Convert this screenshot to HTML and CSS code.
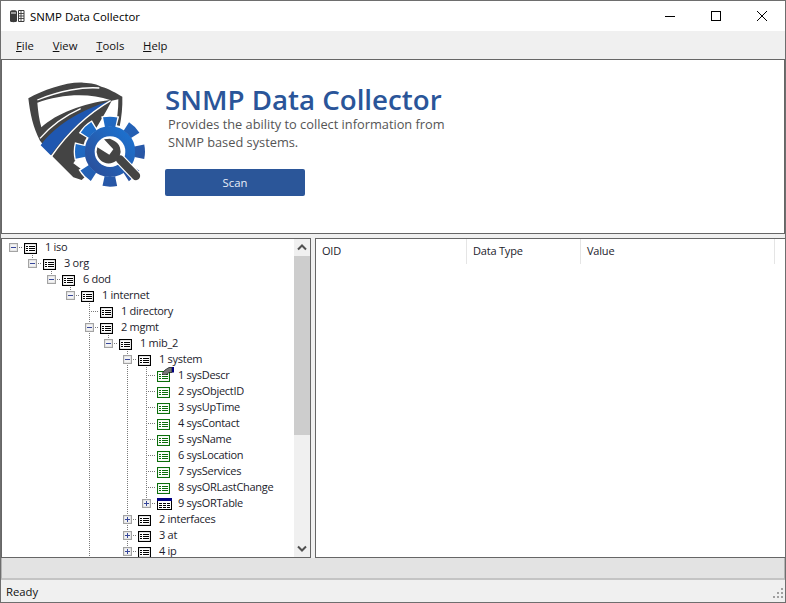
FILE: index.html
```html
<!DOCTYPE html>
<html lang="en">
<head>
<meta charset="utf-8">
<title>SNMP Data Collector</title>
<link rel="stylesheet" href="styles.css">
</head>
<body>
<svg class="defs" width="0" height="0" aria-hidden="true">
  <defs>
    <symbol id="node" viewBox="0 0 13 11">
      <rect x=".5" y=".5" width="12" height="10" fill="#fff" stroke="#000" stroke-width="1.200"/>
      <path d="M2 3.500h2M5 3.500h6M2 5.500h2M5 5.500h6M2 7.500h2M5 7.500h6" stroke="#000" stroke-width="1"/>
    </symbol>
    <symbol id="leaf" viewBox="0 0 13 11">
      <rect x=".5" y=".5" width="12" height="10" fill="#fff" stroke="#0a6e0a" stroke-width="1.100"/>
      <path d="M2 3.500h2M5 3.500h6M2 5.500h2M5 5.500h6M2 7.500h2M5 7.500h6" stroke="#0a6e0a" stroke-width="1"/>
    </symbol>
    <symbol id="table" viewBox="0 0 15 12">
      <rect x=".5" y=".5" width="14" height="11" fill="#fff" stroke="#000"/>
      <rect x="0" y="0" width="15" height="3" fill="#000080"/>
      <path d="M2 5.500h11M2 7.500h11M2 9.500h11" stroke="#000"/>
      <path d="M5.500 5v5M9.500 5v5" stroke="#fff"/>
    </symbol>
  </defs>
</svg>
<div class="window">
  <header class="titlebar">
    <svg class="appicon" viewBox="0 0 15 14" width="15" height="14">
      <path d="M0 2.500C0 .8 7 .8 7 2.500V12c0 1.600-7 1.600-7 0z" fill="#3b3b3b"/>
      <path d="M1 4h5" stroke="#fff"/>
      <path d="M8.500 1.500h5.500v11H8.500z" fill="#fff" stroke="#3b3b3b"/>
      <path d="M9 4.500h5M9 7h5M9 9.500h5M11 2v10" stroke="#3b3b3b" stroke-width=".9"/>
    </svg>
    <span class="apptitle">SNMP Data Collector</span>
    <div class="winbtns">
      <svg class="winbtn" width="46" height="30" viewBox="0 0 46 30"><path d="M18 15.500h10" stroke="#000"/></svg>
      <svg class="winbtn" width="46" height="30" viewBox="0 0 46 30"><rect x="18.500" y="10.500" width="9" height="9" fill="none" stroke="#000"/></svg>
      <svg class="winbtn" width="46" height="30" viewBox="0 0 46 30"><path d="M18 10l10 10M28 10L18 20" stroke="#000" fill="none"/></svg>
    </div>
  </header>
  <nav class="menubar">
    <span class="menu"><u>F</u>ile</span>
    <span class="menu"><u>V</u>iew</span>
    <span class="menu"><u>T</u>ools</span>
    <span class="menu"><u>H</u>elp</span>
  </nav>
  <section class="banner">
    <svg class="logo" viewBox="0 0 450 390" width="150" height="130">
      <defs>
        <linearGradient id="blue" x1="0" y1="1" x2="1" y2="0">
          <stop offset="0" stop-color="#2b4f9a"/><stop offset="1" stop-color="#1c72d0"/>
        </linearGradient>
      </defs>
      <path d="M55 85C100 60 170 35 220 38C245 39 262 43 274 50C295 55 320 70 337 80C338 110 335 140 328 175L300 250L215 330L190 322L130 262L90 212C70 175 60 130 55 85Z" fill="#444"/>
      <path d="M82 90C150 62 220 50 268 54" fill="none" stroke="#fff" stroke-width="4"/>
      <path d="M82 98C150 72 240 68 300 90C220 100 140 130 94 172C88 150 84 125 82 98Z" fill="#fff"/>
      <path d="M305 92L325 88C325 120 322 145 315 175L230 310L190 280C230 220 270 160 305 92Z" fill="#fff"/>
      <path d="M90 205C125 165 170 135 212 116" fill="none" stroke="#fff" stroke-width="4"/>
      <path d="M92 226C130 170 210 120 302 92C240 125 175 180 122 256Z" fill="#1f57b0"/>
      <path d="M125 258C178 182 242 127 302 92" fill="none" stroke="#fff" stroke-width="4"/>
      <circle cx="300" cy="245" r="60" fill="none" stroke="#fff" stroke-width="44"/>
      <circle cx="300" cy="245" r="90" fill="none" stroke="#fff" stroke-width="38" stroke-dasharray="46 24.690" stroke-dashoffset="23" transform="rotate(-90 300 245)"/>
      <circle cx="300" cy="245" r="60" fill="none" stroke="url(#blue)" stroke-width="32"/>
      <circle cx="300" cy="245" r="90" fill="none" stroke="url(#blue)" stroke-width="30" stroke-dasharray="38 32.690" stroke-dashoffset="19" transform="rotate(-90 300 245)"/>
      <circle cx="300" cy="245" r="46" fill="#fff"/>
      <path d="M330 268L378 318" fill="none" stroke="#fff" stroke-width="32" stroke-linecap="round"/>
      <circle cx="296" cy="243" r="38" fill="#fff"/>
      <path d="M330 268L378 318" fill="none" stroke="#444" stroke-width="25" stroke-linecap="round"/>
      <path d="M262 232A36 36 0 1 0 312 212L300 206L282 208L310 238L298 254L262 232Z" fill="#444"/>
    </svg>
    <div class="intro">
      <h1 class="heading">SNMP Data Collector</h1>
      <p class="desc">Provides the ability to collect information from<br>SNMP based systems.</p>
      <button class="scan">Scan</button>
    </div>
  </section>
  <main class="panes">
    <div class="treepane">
      <div class="tree">
        <div class="row"><span class="exp root"><i class="box minus"></i></span><span class="ico"><svg class="ic"><use href="#node"/></svg></span><span class="lbl">1 iso</span></div>
        <div class="row"><span class="c"></span><span class="exp"><i class="box minus"></i></span><span class="ico"><svg class="ic"><use href="#node"/></svg></span><span class="lbl">3 org</span></div>
        <div class="row"><span class="c"></span><span class="c"></span><span class="exp"><i class="box minus"></i></span><span class="ico"><svg class="ic"><use href="#node"/></svg></span><span class="lbl">6 dod</span></div>
        <div class="row"><span class="c"></span><span class="c"></span><span class="c"></span><span class="exp"><i class="box minus"></i></span><span class="ico"><svg class="ic"><use href="#node"/></svg></span><span class="lbl">1 internet</span></div>
        <div class="row"><span class="c"></span><span class="c"></span><span class="c"></span><span class="c"></span><span class="c br"></span><span class="ico"><svg class="ic"><use href="#node"/></svg></span><span class="lbl">1 directory</span></div>
        <div class="row"><span class="c"></span><span class="c"></span><span class="c"></span><span class="c"></span><span class="exp full"><i class="box minus"></i></span><span class="ico"><svg class="ic"><use href="#node"/></svg></span><span class="lbl">2 mgmt</span></div>
        <div class="row"><span class="c"></span><span class="c"></span><span class="c"></span><span class="c"></span><span class="c v"></span><span class="exp"><i class="box minus"></i></span><span class="ico"><svg class="ic"><use href="#node"/></svg></span><span class="lbl">1 mib_2</span></div>
        <div class="row"><span class="c"></span><span class="c"></span><span class="c"></span><span class="c"></span><span class="c v"></span><span class="c"></span><span class="exp full"><i class="box minus"></i></span><span class="ico"><svg class="ic"><use href="#node"/></svg></span><span class="lbl">1 system</span></div>
        <div class="row"><span class="c"></span><span class="c"></span><span class="c"></span><span class="c"></span><span class="c v"></span><span class="c"></span><span class="c v"></span><span class="c br"></span><span class="ico"><svg class="ic"><use href="#leaf"/></svg><svg class="hand" viewBox="0 0 12 8" width="12" height="8"><path d="M0 6.500L3 3L7 .5H10V5.500H7L4 8H1Z" fill="#777" stroke="#111" stroke-width=".7"/><rect x="10" y="0" width="2" height="5.500" fill="#000080"/></svg></span><span class="lbl">1 sysDescr</span></div>
        <div class="row"><span class="c"></span><span class="c"></span><span class="c"></span><span class="c"></span><span class="c v"></span><span class="c"></span><span class="c v"></span><span class="c br"></span><span class="ico"><svg class="ic"><use href="#leaf"/></svg></span><span class="lbl">2 sysObjectID</span></div>
        <div class="row"><span class="c"></span><span class="c"></span><span class="c"></span><span class="c"></span><span class="c v"></span><span class="c"></span><span class="c v"></span><span class="c br"></span><span class="ico"><svg class="ic"><use href="#leaf"/></svg></span><span class="lbl">3 sysUpTime</span></div>
        <div class="row"><span class="c"></span><span class="c"></span><span class="c"></span><span class="c"></span><span class="c v"></span><span class="c"></span><span class="c v"></span><span class="c br"></span><span class="ico"><svg class="ic"><use href="#leaf"/></svg></span><span class="lbl">4 sysContact</span></div>
        <div class="row"><span class="c"></span><span class="c"></span><span class="c"></span><span class="c"></span><span class="c v"></span><span class="c"></span><span class="c v"></span><span class="c br"></span><span class="ico"><svg class="ic"><use href="#leaf"/></svg></span><span class="lbl">5 sysName</span></div>
        <div class="row"><span class="c"></span><span class="c"></span><span class="c"></span><span class="c"></span><span class="c v"></span><span class="c"></span><span class="c v"></span><span class="c br"></span><span class="ico"><svg class="ic"><use href="#leaf"/></svg></span><span class="lbl">6 sysLocation</span></div>
        <div class="row"><span class="c"></span><span class="c"></span><span class="c"></span><span class="c"></span><span class="c v"></span><span class="c"></span><span class="c v"></span><span class="c br"></span><span class="ico"><svg class="ic"><use href="#leaf"/></svg></span><span class="lbl">7 sysServices</span></div>
        <div class="row"><span class="c"></span><span class="c"></span><span class="c"></span><span class="c"></span><span class="c v"></span><span class="c"></span><span class="c v"></span><span class="c br"></span><span class="ico"><svg class="ic"><use href="#leaf"/></svg></span><span class="lbl">8 sysORLastChange</span></div>
        <div class="row"><span class="c"></span><span class="c"></span><span class="c"></span><span class="c"></span><span class="c v"></span><span class="c"></span><span class="c v"></span><span class="exp"><i class="box plus"></i></span><span class="ico"><svg class="ic wide"><use href="#table"/></svg></span><span class="lbl">9 sysORTable</span></div>
        <div class="row"><span class="c"></span><span class="c"></span><span class="c"></span><span class="c"></span><span class="c v"></span><span class="c"></span><span class="exp full"><i class="box plus"></i></span><span class="ico"><svg class="ic"><use href="#node"/></svg></span><span class="lbl">2 interfaces</span></div>
        <div class="row"><span class="c"></span><span class="c"></span><span class="c"></span><span class="c"></span><span class="c v"></span><span class="c"></span><span class="exp full"><i class="box plus"></i></span><span class="ico"><svg class="ic"><use href="#node"/></svg></span><span class="lbl">3 at</span></div>
        <div class="row"><span class="c"></span><span class="c"></span><span class="c"></span><span class="c"></span><span class="c v"></span><span class="c"></span><span class="exp full"><i class="box plus"></i></span><span class="ico"><svg class="ic"><use href="#node"/></svg></span><span class="lbl">4 ip</span></div>
      </div>
      <div class="scrollbar">
        <svg class="arrow" width="16" height="17" viewBox="0 0 16 17"><path d="M4 10.500L8 6.500L12 10.500" fill="none" stroke="#505050" stroke-width="2"/></svg>
        <div class="thumb"></div>
        <div class="track"></div>
        <svg class="arrow" width="16" height="17" viewBox="0 0 16 17"><path d="M4 6.500L8 10.500L12 6.500" fill="none" stroke="#505050" stroke-width="2"/></svg>
      </div>
    </div>
    <div class="listpane">
      <div class="listhead">
        <span class="col col-oid">OID</span>
        <span class="col col-type">Data Type</span>
        <span class="col col-value">Value</span>
      </div>
    </div>
  </main>
  <div class="strip"></div>
  <footer class="status">
    <span>Ready</span>
    <svg class="grip" width="12" height="12" viewBox="0 0 12 12"><path d="M9 0h2v2H9zM5 4h2v2H5zM9 4h2v2H9zM1 8h2v2H1zM5 8h2v2H5zM9 8h2v2H9z" fill="#a0a0a0"/></svg>
  </footer>
</div>
</body>
</html>
```
FILE: styles.css
```css
* { box-sizing: border-box; }
html, body { margin: 0; padding: 0; }
body { width: 786px; height: 603px; overflow: hidden; background: #f0f0f0; font-family: "Open Sans", "Noto Sans", sans-serif; font-size: 11.3px; color: #1a1a1a; }
.defs { position: absolute; }

.window { width: 786px; height: 603px; display: flex; flex-direction: column; border: 1px solid #6e6e6e; background: #f0f0f0; overflow: hidden; }

.titlebar { flex: none; height: 30px; display: flex; align-items: center; background: #fff; padding-left: 9px; }
.appicon { flex: none; margin-right: 5px; }
.apptitle { font-size: 11.4px; color: #000; }
.winbtns { margin-left: auto; display: flex; }
.winbtn { display: block; }

.menubar { flex: none; height: 28px; display: flex; align-items: center; padding-left: 15px; gap: 18.8px; background: #f0f0f0; font-size: 11.3px; color: #111; }

.banner { flex: none; height: 175px; display: flex; background: #fff; border: 1px solid #666; }
.logo { flex: none; margin: 10px 0 0 8px; display: block; }
.intro { margin-left: 5px; display: flex; flex-direction: column; align-items: flex-start; }
.heading { margin: 24px 0 0; font-size: 27.7px; line-height: 30px; font-weight: 600; color: #2a5599; }
.desc { margin: 1px 0 0 3px; font-size: 12.8px; line-height: 18px; color: #555; }
.scan { margin-top: 18px; width: 140px; height: 27px; background: #2b5699; color: #e8eef8; border: 0; border-radius: 2px; font: inherit; font-size: 11.3px; padding: 0; }

.panes { flex: none; height: 320px; margin-top: 4px; display: flex; gap: 4px; }
.treepane { width: 310px; flex: none; display: flex; background: #fff; border: 1px solid #666; overflow: hidden; }
.tree { flex: 1; padding-left: 2px; overflow: hidden; min-width: 0; }
.row { display: flex; height: 16px; align-items: flex-start; white-space: nowrap; }
.c, .exp { flex: none; width: 19px; height: 16px; }
.v { background: repeating-linear-gradient(to bottom, #7a7a7a 0 1px, transparent 1px 2px) 9px 0 / 1px 100% no-repeat; }
.br {
  background:
    repeating-linear-gradient(to bottom, #7a7a7a 0 1px, transparent 1px 2px) 9px 0 / 1px 100% no-repeat,
    repeating-linear-gradient(to right, #7a7a7a 0 1px, transparent 1px 2px) 9px 8px / 10px 1px no-repeat;
}
.exp {
  display: flex; align-items: center; justify-content: center; padding-right: 1px; padding-top: 1px;
  background:
    repeating-linear-gradient(to bottom, #7a7a7a 0 1px, transparent 1px 2px) 9px 0 / 1px 8px no-repeat,
    repeating-linear-gradient(to right, #7a7a7a 0 1px, transparent 1px 2px) 9px 8px / 10px 1px no-repeat;
}
.exp.root { background: repeating-linear-gradient(to right, #7a7a7a 0 1px, transparent 1px 2px) 9px 8px / 10px 1px no-repeat; }
.exp.full { background:
    repeating-linear-gradient(to bottom, #7a7a7a 0 1px, transparent 1px 2px) 9px 0 / 1px 100% no-repeat,
    repeating-linear-gradient(to right, #7a7a7a 0 1px, transparent 1px 2px) 9px 8px / 10px 1px no-repeat;
}
.box { display: block; width: 9px; height: 9px; border: 1px solid #a3a3a3; box-shadow: inset 0 0 0 .5px #d8d8d8; background-color: #f4f4f4; background-repeat: no-repeat; }
.minus { background-image: linear-gradient(#37479a, #37479a); background-position: center; background-size: 5px 1px; }
.plus { background-image: linear-gradient(#37479a, #37479a), linear-gradient(#37479a, #37479a); background-position: center; background-size: 5px 1px, 1px 5px; }
.ico { flex: none; width: 15px; height: 16px; position: relative; padding: 4px 0 0 1px; }
.ic { display: block; width: 13px; height: 11px; }
.ic.wide { width: 15px; height: 12px; margin-top: -1px; }
.hand { position: absolute; left: 6px; top: 0; }
.lbl { margin-left: 7px; line-height: 16px; font-size: 11px; letter-spacing: -.28px; color: #1c1c2c; }

.scrollbar { flex: none; width: 16px; background: #f0f0f0; display: flex; flex-direction: column; }
.arrow { display: block; flex: none; }
.thumb { flex: none; height: 179px; background: #cdcdcd; }
.track { flex: 1; }

.listpane { flex: 1; background: #fff; border: 1px solid #666; border-right: 0; min-width: 0; }
.listhead { height: 25px; display: flex; }
.col { display: block; height: 25px; line-height: 24px; padding-left: 6px; border-right: 1px solid #e5e5e5; font-size: 11px; letter-spacing: -.2px; color: #1c1c2c; }
.col-oid { width: 151px; }
.col-type { width: 114px; }
.col-value { width: 194px; }

.strip { flex: none; height: 22px; background: #e3e3e3; border-bottom: 2px solid #c4c4c4; border-left: 1px solid #b4b4b4; border-right: 1px solid #b4b4b4; }
.status { flex: 1; display: flex; align-items: center; justify-content: space-between; padding: 0 1px 0 5px; background: #f0f0f0; font-size: 11.3px; color: #111; }
.grip { align-self: flex-end; margin-bottom: 2px; }
```
